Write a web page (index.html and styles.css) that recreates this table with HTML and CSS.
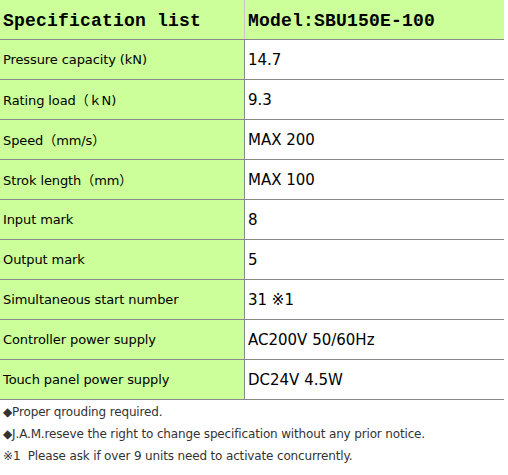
FILE: index.html
```html
<!DOCTYPE html>
<html lang="en">
<head>
<meta charset="utf-8">
<link rel="stylesheet" href="styles.css">
</head>
<body>
<table class="spec">
  <thead>
    <tr class="head">
      <th class="h-left">Specification list</th>
      <th class="h-right">Model:SBU150E-100</th>
    </tr>
  </thead>
  <tbody>
    <tr><td class="label">Pressure capacity (kN)</td><td class="value">14.7</td></tr>
    <tr><td class="label">Rating load（ｋN)</td><td class="value">9.3</td></tr>
    <tr><td class="label">Speed（mm/s）</td><td class="value">MAX 200</td></tr>
    <tr><td class="label">Strok length（mm）</td><td class="value">MAX 100</td></tr>
    <tr><td class="label">Input mark</td><td class="value">8</td></tr>
    <tr><td class="label">Output mark</td><td class="value">5</td></tr>
    <tr><td class="label">Simultaneous start number</td><td class="value">31 ※1</td></tr>
    <tr><td class="label">Controller power supply</td><td class="value">AC200V 50/60Hz</td></tr>
    <tr><td class="label">Touch panel power supply</td><td class="value">DC24V 4.5W</td></tr>
  </tbody>
</table>
<div class="notes">
  <p class="note">◆Proper qrouding required.</p>
  <p class="note">◆J.A.M.reseve the right to change specification without any prior notice.</p>
  <p class="note">※1&nbsp;&nbsp;Please ask if over 9 units need to activate concurrently.</p>
</div>
</body>
</html>
```
FILE: styles.css
```css
html, body {
  margin: 0;
  padding: 0;
  background: #ffffff;
}
body {
  font-family: "DejaVu Sans", "Noto Sans CJK JP", sans-serif;
  color: #000;
}
.spec {
  width: 504px;
  border-collapse: collapse;
  table-layout: fixed;
}
.spec th, .spec td {
  padding: 0 0 0 3px;
  text-align: left;
  vertical-align: middle;
}
.head th {
  height: 36px;
  padding-top: 3px;
  background: #ccff99;
  font-family: "Liberation Mono", monospace;
  font-weight: bold;
  font-size: 18px;
  color: #000;
  border-bottom: 1px solid #888;
  letter-spacing: 0.2px;
}
.h-left {
  width: 241px;
  border-right: 1px solid #c9c2cf;
}
.spec td {
  height: 39px;
  border-bottom: 1px solid #888;
}
.label {
  background: #ccff99;
  font-size: 13px;
  letter-spacing: -0.1px;
  border-right: 1px solid #888;
}
.value {
  font-size: 15px;
}
.notes {
  padding: 1px 0 0 3px;
}
.note {
  margin: 0;
  font-size: 12px;
  line-height: 22px;
  letter-spacing: -0.15px;
  color: #333;
}
```
